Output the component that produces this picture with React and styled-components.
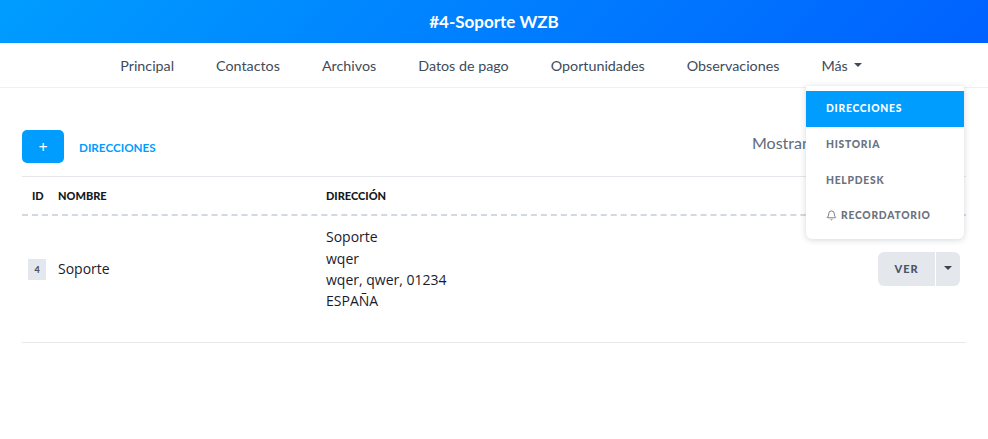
import React from 'react';
import styled, { createGlobalStyle } from 'styled-components';
import { Bell } from 'lucide-react';

const UI_FONT = `'Lato', 'Noto Sans', sans-serif`;
const BODY_FONT = `'Open Sans', 'Noto Sans', sans-serif`;

const Global = createGlobalStyle`
  * { box-sizing: border-box; }
  html, body { margin: 0; padding: 0; background: #fff; }
  body { font-family: ${BODY_FONT}; color: #1a1a2e; overflow: hidden; }
`;

const Page = styled.div`
  position: relative;
  width: 988px;
  height: 439px;
  overflow: hidden;
`;

const Header = styled.header`
  height: 43px;
  display: flex;
  align-items: center;
  justify-content: center;
  background: linear-gradient(135deg, #009dff 0%, #0061ff 100%);
  color: #fff;
  font-family: ${UI_FONT};
  font-size: 17px;
  font-weight: 700;
`;

const Nav = styled.nav`
  height: 45px;
  display: flex;
  align-items: center;
  justify-content: center;
  gap: 42px;
  padding-right: 6px;
  border-bottom: 1px solid #eef0f3;
  font-family: ${UI_FONT};
  font-size: 14.3px;
  color: #3e4b5b;
`;

const NavItem = styled.span`
  display: inline-flex;
  align-items: center;
  gap: 6px;
`;

const Caret = styled.i`
  display: inline-block;
  width: 0;
  height: 0;
  border-left: 4px solid transparent;
  border-right: 4px solid transparent;
  border-top: 4px solid ${p => p.$color || '#3e4b5b'};
`;

const Menu = styled.div`
  position: absolute;
  top: 86px;
  left: 806px;
  width: 158px;
  height: 153px;
  padding-top: 5px;
  background: #fff;
  border-radius: 0 0 6px 6px;
  box-shadow: 0 1px 6px rgba(40, 50, 70, 0.2);
  z-index: 5;
`;

const MenuItem = styled.div`
  height: ${p => p.$h || 36}px;
  display: flex;
  align-items: center;
  gap: 4px;
  padding: 0 0 2px 20px;
  font-family: ${UI_FONT};
  font-size: 10.3px;
  font-weight: 900;
  letter-spacing: 0.75px;
  background: ${p => (p.$active ? '#009dff' : 'transparent')};
  color: ${p => (p.$active ? '#fff' : '#6b7280')};
`;

const Main = styled.main`
  padding: 42px 22px 0;
`;

const Toolbar = styled.div`
  height: 33px;
  display: flex;
  align-items: center;
  margin-bottom: 13px;
`;

const AddButton = styled.div`
  width: 42px;
  height: 33px;
  display: flex;
  align-items: center;
  justify-content: center;
  border-radius: 5px;
  background: #009dff;
  color: #fff;
  font-family: ${BODY_FONT};
  font-size: 16px;
`;

const ToolbarTitle = styled.span`
  margin-left: 15px;
  font-family: ${UI_FONT};
  font-size: 11.7px;
  font-weight: 700;
  color: #009dff;
`;

const Showing = styled.span`
  margin-left: auto;
  width: 214px;
  padding-bottom: 8px;
  white-space: nowrap;
  font-family: ${UI_FONT};
  font-size: 16px;
  color: #5f6b78;
`;

const Table = styled.div`
  width: 944px;
  border-top: 1px solid #e4e7ec;
`;

const HeadRow = styled.div`
  height: 39px;
  display: grid;
  grid-template-columns: 36px 268px 1fr;
  align-items: center;
  border-bottom: 2px dashed #d3d9e0;
  font-family: ${UI_FONT};
  font-size: 11px;
  font-weight: 900;
  color: #14181f;
`;

const HeadCell = styled.div`
  padding-left: ${p => p.$pad || 0}px;
`;

const BodyRow = styled.div`
  height: 127px;
  display: grid;
  grid-template-columns: 36px 268px 1fr auto;
  align-items: center;
  border-bottom: 1px solid #e8eaee;
  font-size: 14px;
  color: #1a1a2e;
  padding-bottom: 20px;
`;

const IdBadge = styled.span`
  width: 18px;
  height: 21px;
  margin-left: 6px;
  display: flex;
  align-items: center;
  justify-content: center;
  background: #e4e8ec;
  font-family: ${UI_FONT};
  font-size: 9px;
  font-weight: 900;
  color: #4a5568;
`;

const NameCell = styled.div`
  padding-bottom: 2px;
`;

const Address = styled.div`
  line-height: 21.4px;
`;

const SplitButton = styled.div`
  display: flex;
  height: 34px;
  margin-right: 6px;
  gap: 1px;
`;

const SplitPart = styled.div`
  width: ${p => p.$w}px;
  display: flex;
  align-items: center;
  justify-content: center;
  padding-bottom: 2px;
  background: #e4e8ec;
  border-radius: ${p => p.$radius};
  font-family: ${UI_FONT};
  font-size: 11px;
  font-weight: 900;
  letter-spacing: 1px;
  color: #4a5568;
`;

export default function App() {
  return (
    <Page>
      <Global />
      <Header>#4-Soporte WZB</Header>
      <Nav>
        <NavItem>Principal</NavItem>
        <NavItem>Contactos</NavItem>
        <NavItem>Archivos</NavItem>
        <NavItem>Datos de pago</NavItem>
        <NavItem>Oportunidades</NavItem>
        <NavItem>Observaciones</NavItem>
        <NavItem>Más <Caret /></NavItem>
      </Nav>
      <Menu>
        <MenuItem $active>DIRECCIONES</MenuItem>
        <MenuItem>HISTORIA</MenuItem>
        <MenuItem>HELPDESK</MenuItem>
        <MenuItem $h={34}><Bell size={11} strokeWidth={2} />RECORDATORIO</MenuItem>
      </Menu>
      <Main>
        <Toolbar>
          <AddButton>+</AddButton>
          <ToolbarTitle>DIRECCIONES</ToolbarTitle>
          <Showing>Mostrando 1 - 1 de 1</Showing>
        </Toolbar>
        <Table>
          <HeadRow>
            <HeadCell $pad={10}>ID</HeadCell>
            <HeadCell>NOMBRE</HeadCell>
            <HeadCell>DIRECCIÓN</HeadCell>
          </HeadRow>
          <BodyRow>
            <IdBadge>4</IdBadge>
            <NameCell>Soporte</NameCell>
            <Address>
              Soporte<br />wqer<br />wqer, qwer, 01234<br />ESPAÑA
            </Address>
            <SplitButton>
              <SplitPart $w={57} $radius="6px 0 0 6px">VER</SplitPart>
              <SplitPart $w={24} $radius="0 6px 6px 0"><Caret $color="#3a4350" /></SplitPart>
            </SplitButton>
          </BodyRow>
        </Table>
      </Main>
    </Page>
  );
}
